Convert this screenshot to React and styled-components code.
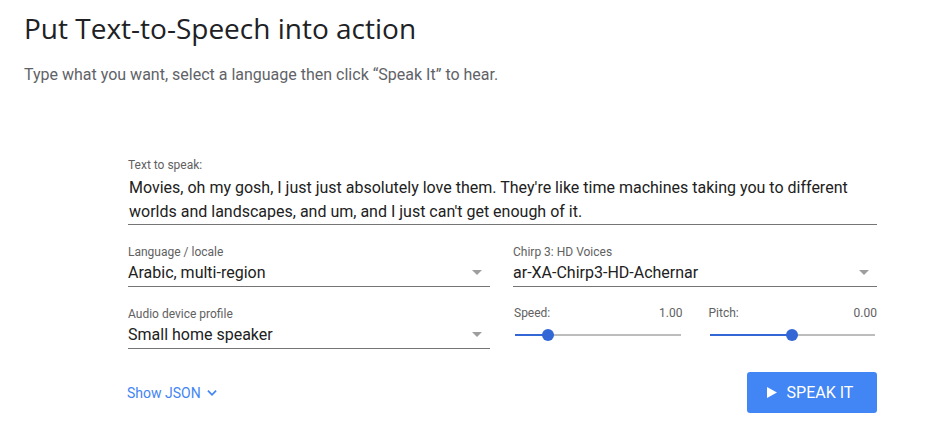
import React from "react";
import styled, { createGlobalStyle } from "styled-components";

const GlobalStyle = createGlobalStyle`
  body {
    margin: 0;
    background: #fff;
    font-family: Roboto, "Liberation Sans", sans-serif;
  }
`;

const Page = styled.div`
  width: 927px;
  height: 435px;
  padding: 11px 0 0 24px;
  box-sizing: border-box;
  overflow: hidden;
`;

const Title = styled.h1`
  margin: 0;
  font-family: "Open Sans", Roboto, sans-serif;
  font-weight: 400;
  font-size: 28px;
  line-height: 34px;
  color: #202124;
`;

const Subtitle = styled.p`
  margin: 18px 0 0;
  font-size: 16px;
  line-height: 24px;
  color: #5f6368;
`;

const Form = styled.div`
  width: 749px;
  margin: 72px 0 0 104px;
`;

const Label = styled.div`
  font-size: 12px;
  line-height: 12px;
  color: #616161;
`;

const TextArea = styled.div`
  margin-top: 5px;
  padding-left: 1px;
  font-size: 16px;
  line-height: 24px;
  color: #212121;
  border-bottom: 1px solid #757575;
`;

const Grid = styled.div`
  display: grid;
  grid-template-columns: 362px 364px;
  column-gap: 23px;
  row-gap: 21px;
  margin-top: 21px;
`;

const Field = styled.div`
  display: flex;
  flex-direction: column;
`;

const Select = styled.div`
  display: flex;
  align-items: center;
  justify-content: space-between;
  height: 28px;
  border-bottom: 1px solid #757575;
  font-size: 16px;
  color: #212121;
  padding-right: 8px;
`;

const Caret = styled.span`
  width: 0;
  height: 0;
  border-left: 5px solid transparent;
  border-right: 5px solid transparent;
  border-top: 5px solid #9e9e9e;
`;

const Sliders = styled.div`
  display: grid;
  grid-template-columns: 1fr 1fr;
  column-gap: 25px;
  margin-top: -1px;
`;

const SliderBox = styled.div`
  display: flex;
  flex-direction: column;
`;

const SliderHead = styled.div`
  display: flex;
  justify-content: space-between;
  padding-left: 1px;
  font-size: 12px;
  line-height: 12px;
  color: #616161;
`;

const Track = styled.div`
  position: relative;
  height: 2px;
  margin: 15px 2px 0 2px;
  background: #bdbdbd;
`;

const Fill = styled.div`
  height: 100%;
  background: #3367d6;
`;

const Thumb = styled.div`
  position: absolute;
  top: -5px;
  width: 12px;
  height: 12px;
  margin-left: -6px;
  border-radius: 50%;
  background: #3367d6;
`;

const Footer = styled.div`
  display: flex;
  justify-content: space-between;
  align-items: center;
  margin-top: 23px;
`;

const JsonLink = styled.a`
  display: flex;
  align-items: center;
  gap: 4px;
  margin-left: -1px;
  font-size: 14px;
  color: #4285f4;
  cursor: pointer;
`;

const SpeakButton = styled.button`
  display: flex;
  align-items: center;
  justify-content: center;
  gap: 10px;
  width: 130px;
  height: 41px;
  padding: 0 4px 0 0;
  border: none;
  border-radius: 3px;
  background: #4285f4;
  color: #fff;
  font-family: Roboto, sans-serif;
  font-size: 16px;
  font-weight: 400;
`;

function Slider({ label, value, pct }) {
  return (
    <SliderBox>
      <SliderHead>
        <span>{label}</span>
        <span>{value}</span>
      </SliderHead>
      <Track>
        <Fill style={{ width: pct + "%" }} />
        <Thumb style={{ left: pct + "%" }} />
      </Track>
    </SliderBox>
  );
}

export default function App() {
  return (
    <Page>
      <GlobalStyle />
      <Title>Put Text-to-Speech into action</Title>
      <Subtitle>
        Type what you want, select a language then click “Speak It” to hear.
      </Subtitle>
      <Form>
        <Label>Text to speak:</Label>
        <TextArea>
          Movies, oh my gosh, I just just absolutely love them. They're like
          time machines taking you to different worlds and landscapes, and um,
          and I just can't get enough of it.
        </TextArea>
        <Grid>
          <Field>
            <Label>Language / locale</Label>
            <Select>
              Arabic, multi-region
              <Caret />
            </Select>
          </Field>
          <Field>
            <Label>Chirp 3: HD Voices</Label>
            <Select>
              ar-XA-Chirp3-HD-Achernar
              <Caret />
            </Select>
          </Field>
          <Field>
            <Label>Audio device profile</Label>
            <Select>
              Small home speaker
              <Caret />
            </Select>
          </Field>
          <Sliders>
            <Slider label="Speed:" value="1.00" pct={20} />
            <Slider label="Pitch:" value="0.00" pct={50} />
          </Sliders>
        </Grid>
        <Footer>
          <JsonLink>
            Show JSON
            <svg width="14" height="14" viewBox="0 0 24 24">
              <path
                d="M5 8l7 7 7-7"
                fill="none"
                stroke="#4285f4"
                strokeWidth="3"
              />
            </svg>
          </JsonLink>
          <SpeakButton>
            <svg width="10" height="11" viewBox="0 0 10 11">
              <path d="M0 0l10 5.5L0 11z" fill="#fff" />
            </svg>
            SPEAK IT
          </SpeakButton>
        </Footer>
      </Form>
    </Page>
  );
}
